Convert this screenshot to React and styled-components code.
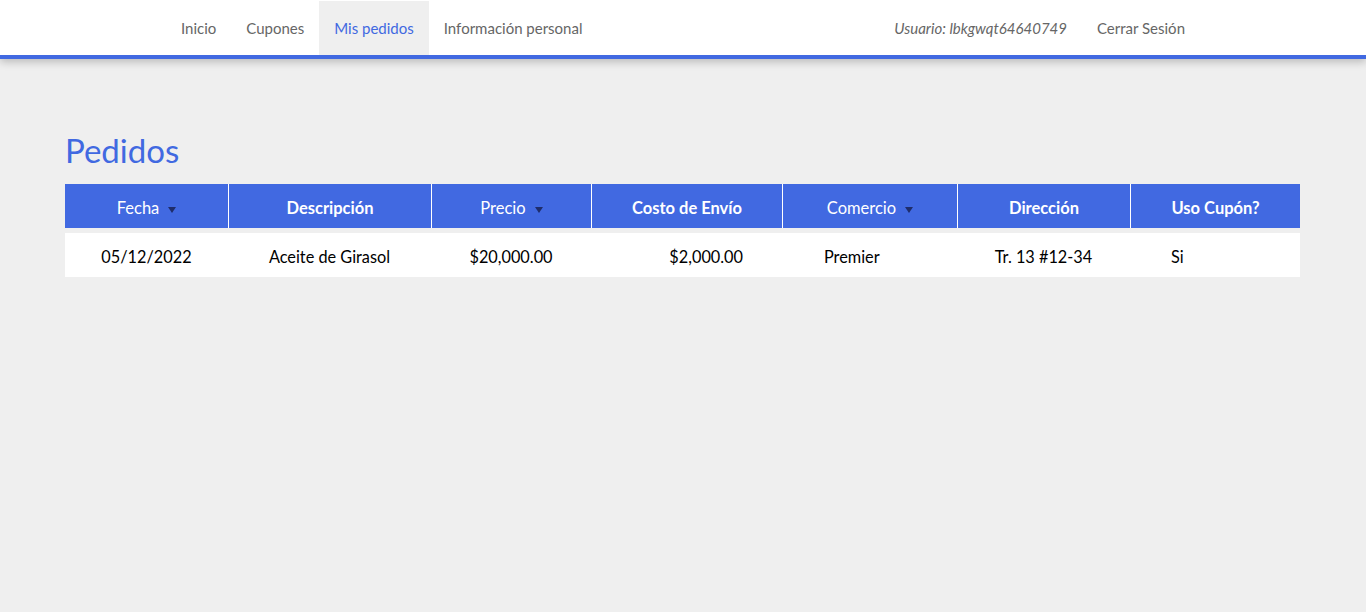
import React from "react";
import styled, { createGlobalStyle } from "styled-components";

const Global = createGlobalStyle`
  html, body { margin: 0; padding: 0; }
  body {
    background: #efefef;
    font-family: "Source Sans Pro", Lato, "Liberation Sans", sans-serif;
    color: #000;
  }
`;

const NavBar = styled.header`
  background: #fff;
  border-bottom: 4px solid #4169e1;
  box-shadow: 0 3px 8px rgba(0, 0, 0, 0.22);
  position: relative;
  z-index: 1;
`;

const NavInner = styled.nav`
  width: 1034px;
  margin: 0 auto;
  display: flex;
  justify-content: space-between;
  align-items: stretch;
  height: 55px;
`;

const NavGroup = styled.ul`
  list-style: none;
  margin: 0;
  padding: 0;
  display: flex;
  align-items: stretch;
`;

const NavItem = styled.li`
  display: flex;
  align-items: center;
  padding: 0 15px;
  margin-top: 1px;
  font-size: 15px;
  color: ${(p) => (p.$active ? "#4169e1" : "#666")};
  background: ${(p) => (p.$active ? "#efefef" : "transparent")};
  font-style: ${(p) => (p.$italic ? "italic" : "normal")};
`;

const Main = styled.main`
  padding: 69px 65px 0 65px;
`;

const Title = styled.h1`
  margin: 0 0 12px 0;
  font-size: 33px;
  font-weight: 400;
  color: #4169e1;
  line-height: 44px;
`;

const Table = styled.div`
  display: flex;
  flex-direction: column;
  gap: 5px;
  width: 1235px;
`;

const Row = styled.div`
  display: grid;
  grid-template-columns: 163px 203px 160px 191px 175px 173px 170px;
  height: 44px;
  background: ${(p) => (p.$head ? "#4169e1" : "#fff")};
`;

const HeadCell = styled.div`
  display: flex;
  align-items: center;
  justify-content: center;
  padding-top: 3px;
  color: #fff;
  font-size: 16.5px;
  font-weight: ${(p) => (p.$bold ? 700 : 400)};
  border-left: ${(p) => (p.$first ? "none" : "1px solid #fff")};
`;

const Arrow = styled.svg`
  width: 8px;
  height: 6px;
  margin-left: 9px;
  margin-top: 4px;
  fill: #1f2d6b;
`;

const Cell = styled.div`
  display: flex;
  align-items: center;
  justify-content: ${(p) =>
    p.$align === "left" ? "flex-start" : p.$align === "right" ? "flex-end" : "center"};
  padding: ${(p) => p.$pad || "0"};
  padding-top: 2px;
  font-size: 16.3px;
  color: #000;
`;

const columns = [
  { label: "Fecha", sort: true },
  { label: "Descripción", bold: true },
  { label: "Precio", sort: true },
  { label: "Costo de Envío", bold: true },
  { label: "Comercio", sort: true },
  { label: "Dirección", bold: true },
  { label: "Uso Cupón?", bold: true },
];

const rows = [
  [
    { v: "05/12/2022" },
    { v: "Aceite de Girasol" },
    { v: "$20,000.00" },
    { v: "$2,000.00", align: "right", pad: "0 39px 0 0" },
    { v: "Premier", align: "left", pad: "0 0 0 42px" },
    { v: "Tr. 13 #12-34" },
    { v: "Si", align: "left", pad: "0 0 0 41px" },
  ],
];

export default function App() {
  return (
    <>
      <Global />
      <NavBar>
        <NavInner>
          <NavGroup>
            <NavItem>Inicio</NavItem>
            <NavItem>Cupones</NavItem>
            <NavItem $active>Mis pedidos</NavItem>
            <NavItem>Información personal</NavItem>
          </NavGroup>
          <NavGroup>
            <NavItem $italic>Usuario: lbkgwqt64640749</NavItem>
            <NavItem>Cerrar Sesión</NavItem>
          </NavGroup>
        </NavInner>
      </NavBar>
      <Main>
        <Title>Pedidos</Title>
        <Table>
          <Row $head>
            {columns.map((c, i) => (
              <HeadCell key={c.label} $bold={c.bold} $first={i === 0}>
                {c.label}
                {c.sort && (
                  <Arrow viewBox="0 0 8 6">
                    <polygon points="0,0 8,0 4,6" />
                  </Arrow>
                )}
              </HeadCell>
            ))}
          </Row>
          {rows.map((r, ri) => (
            <Row key={ri}>
              {r.map((c, ci) => (
                <Cell key={ci} $align={c.align} $pad={c.pad}>
                  {c.v}
                </Cell>
              ))}
            </Row>
          ))}
        </Table>
      </Main>
    </>
  );
}
